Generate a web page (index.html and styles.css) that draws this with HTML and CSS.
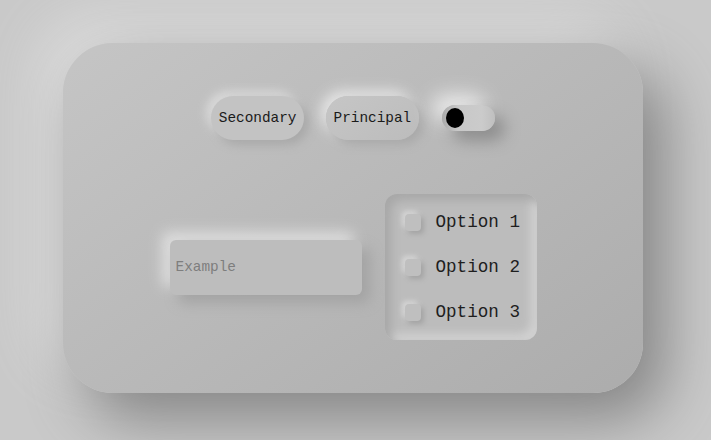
FILE: index.html
```html
<!DOCTYPE html>
<html>
<head>
<meta charset="utf-8">
<link rel="stylesheet" href="styles.css">
</head>
<body>
<div class="card">
  <div class="top-row">
    <button class="btn btn-secondary">Secondary</button>
    <button class="btn btn-primary">Principal</button>
    <div class="toggle"><span class="knob"></span></div>
  </div>
  <div class="bottom-row">
    <input class="field" type="text" placeholder="Example">
    <div class="options">
      <label class="option"><span class="box"></span><span class="label">Option 1</span></label>
      <label class="option"><span class="box"></span><span class="label">Option 2</span></label>
      <label class="option"><span class="box"></span><span class="label">Option 3</span></label>
    </div>
  </div>
</div>
</body>
</html>
```
FILE: styles.css
```css
html, body {
  margin: 0;
  padding: 0;
  height: 100%;
}
body {
  background: #c9c9c9;
  display: flex;
  align-items: center;
  justify-content: center;
  font-family: "Courier New", "Liberation Mono", monospace;
}
.card {
  width: 580px;
  height: 350px;
  margin: 0 5px 4px 0;
  border-radius: 50px;
  background: linear-gradient(145deg, #c5c5c5, #acacac);
  box-shadow: 22px 26px 60px #858585, -22px -22px 55px #dedede;
  display: flex;
  flex-direction: column;
  align-items: center;
  justify-content: center;
  gap: 54px;
  box-sizing: border-box;
}
.top-row {
  display: flex;
  align-items: center;
  gap: 22px;
}
.btn {
  height: 44px;
  padding: 0 7.5px;
  border: none;
  border-radius: 22px;
  background: #c3c3c3;
  font-family: inherit;
  font-size: 14.4px;
  color: #1a1a1a;
  box-shadow: 5px 5px 10px #a9a9a9, -5px -5px 10px #d9d9d9;
}
.btn-primary {
  background: linear-gradient(145deg, #c6c6c6, #bcbcbc);
  box-shadow: 5px 5px 10px #a9a9a9, -5px -5px 14px #e8e8e8;
}
.toggle {
  width: 53px;
  height: 26px;
  margin-left: 1px;
  border-radius: 13px;
  background: linear-gradient(90deg, #a9a9a9 0%, #c8c8c8 30%, #cbcbcb 75%, #bfbfbf 100%);
  box-shadow: 10px 10px 16px #8e8e8e, -10px -10px 20px #ececec;
  display: flex;
  align-items: center;
  padding-left: 4px;
  box-sizing: border-box;
}
.knob {
  width: 18px;
  height: 20px;
  border-radius: 50%;
  background: #000;
}
.bottom-row {
  display: flex;
  align-items: center;
  gap: 23px;
}
.field {
  width: 192px;
  height: 55px;
  box-sizing: border-box;
  border: none;
  border-radius: 6px;
  padding: 0 6px;
  background: #bdbdbd;
  font-family: inherit;
  font-size: 14.4px;
  color: #333;
  outline: none;
  box-shadow: 8px 8px 14px #a3a3a3, -8px -8px 14px #dedede;
}
.field::placeholder {
  color: #7e7e7e;
}
.options {
  width: 152px;
  box-sizing: border-box;
  padding: 17px 10px 17px 20px;
  border-radius: 12px;
  background: #bcbcbc;
  box-shadow: inset 6px 6px 10px #a8a8a8, inset -6px -6px 10px #d2d2d2;
  display: flex;
  flex-direction: column;
  gap: 23px;
}
.option {
  display: flex;
  align-items: center;
  gap: 15px;
  height: 22px;
}
.box {
  width: 16px;
  height: 17px;
  border-radius: 4px;
  background: #bfbfbf;
  box-shadow: 3px 3px 5px #a4a4a4, -3px -3px 5px #d6d6d6;
}
.label {
  font-size: 17.6px;
  color: #1e1e1e;
  line-height: 22px;
}
```
